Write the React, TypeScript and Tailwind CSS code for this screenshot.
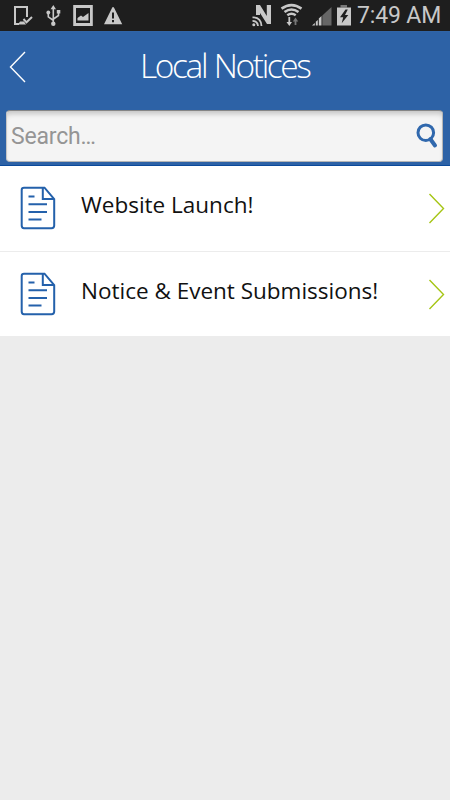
import React from 'react';

const notices = [
  { id: 1, title: 'Website Launch!' },
  { id: 2, title: 'Notice & Event Submissions!' },
];

function StatusBar() {
  return (
    <div className="flex h-[31px] items-start bg-[#1e1e1e] text-[#c8c8c8]">
      <svg width="140" height="31" viewBox="0 0 140 31" fill="none">
        <path d="M19 24H15V7H27V17" stroke="currentColor" strokeWidth="2" />
        <path d="M18 24.5L20 21.5H24L26 24.5Z" fill="currentColor" />
        <path d="M23.5 19L26.5 22.3L32 17" stroke="currentColor" strokeWidth="2" />
        <path d="M53.3 8V23M48.3 13V16.8L53.5 20.5M58.5 12V15.5L53.5 19" stroke="currentColor" strokeWidth="1.6" />
        <path d="M50.6 9.3L53.3 5L56 9.3Z" fill="currentColor" />
        <circle cx="53.3" cy="23.7" r="2.2" fill="currentColor" />
        <circle cx="48.3" cy="12.5" r="1.9" fill="currentColor" />
        <path d="M56.8 10H60.3V13.5H56.8Z" fill="currentColor" />
        <path d="M74.6 6.5H91.4V24.5H74.6Z" stroke="currentColor" strokeWidth="2.8" />
        <path d="M77.5 20.5V18L81 15.5L83 17L88.5 13V20.5Z" fill="currentColor" />
        <path d="M113 7Q113.7 7 114.2 8L122.2 24.3H104L112 8Q112.4 7 113 7Z" fill="currentColor" />
        <path d="M113 12.5V18.5M113 20V22.3" stroke="#1e1e1e" strokeWidth="2" />
      </svg>
      <svg className="ml-auto" width="115" height="31" viewBox="240 0 115 31" fill="none">
        <path d="M256 15V5H260L266.8 16V5H271V24H267L260 13V15Z" fill="currentColor" />
        <path d="M252.5 17.3Q261 17 261.5 26M252.5 20.8Q257.5 21 258 26" stroke="currentColor" strokeWidth="1.8" />
        <circle cx="253.8" cy="24.7" r="1.5" fill="currentColor" />
        <path d="M281.5 8.6Q291.5 1.5 301.5 8.6M284.5 12Q291.5 7 298.5 12M287.3 15.2Q291.5 12.3 295.7 15.2" stroke="currentColor" strokeWidth="2.6" />
        <path d="M289.3 17V24" stroke="currentColor" strokeWidth="1.8" />
        <path d="M286.5 22H292L289.3 26Z" fill="currentColor" />
        <path d="M295.5 25V20" stroke="#777777" strokeWidth="1.8" />
        <path d="M292.8 21.5H298.2L295.5 17.5Z" fill="#777777" />
        <path d="M322.3 15.5L331.5 7V25.5H322.3Z" fill="#666666" />
        <path d="M312 25.5L314.8 23V25.5ZM315.8 25.5V21.8L317.8 20V25.5ZM318.8 25.5V18.5L321.5 16V25.5Z" fill="currentColor" />
        <path d="M340.5 5H347V7.5H340.5Z" fill="#777777" />
        <path d="M337 7.5H351V25.5H337Z" fill="currentColor" />
        <path d="M345.5 9.5L340 17.3H343.2L341.7 23.3L348.3 15H345L347.8 9.5Z" fill="#1e1e1e" />
      </svg>
      <div className="w-[95px] pl-[2px] font-[Roboto,sans-serif] text-[23px] leading-[32px] tracking-[-0.15px] whitespace-nowrap">
        7:49 AM
      </div>
    </div>
  );
}

function NoticeIcon() {
  return (
    <svg width="36" height="44" viewBox="0 0 36 44" fill="none" stroke="#2461ab" strokeWidth="2">
      <path d="M4 1.7H24.5L34.2 13V39.5Q34.2 42.2 31.5 42.2H4Q1.7 42.2 1.7 39.5V4Q1.7 1.7 4 1.7Z" />
      <path d="M22.8 1.7V13H34M8.5 10.5H14.5M8.5 18.2H27M8.5 25.9H27M8.5 33.5H21.5" />
    </svg>
  );
}

export default function App() {
  return (
    <div className="flex h-[800px] w-[450px] flex-col overflow-hidden bg-[#ececec]">
      <StatusBar />
      <header className="h-[135px] border-t border-b border-t-[#3065a8] border-b-[#0b4a9b] bg-[#2d62a6]">
        <div className="flex h-[78px] items-start">
          <button className="pt-[19px] pl-[9px]">
            <svg width="18" height="32" viewBox="0 0 18 32" fill="none" stroke="#ffffff" strokeWidth="1.4">
              <path d="M16 1L1.5 16L16 31" />
            </svg>
          </button>
          <h1 className="ml-[113px] pt-[10px] font-['Open_Sans',sans-serif] text-[33.5px] leading-[47px] font-light tracking-[-2.4px] [word-spacing:1.5px] whitespace-nowrap text-white">
            Local Notices
          </h1>
        </div>
        <div className="mr-[7px] ml-[6px] flex h-[52px] items-center rounded-[4px] border border-t-[#858585] border-r-[#b5b5b5] border-b-[#b5b5b5] border-l-[#c5c5c5] bg-[#f4f4f4] pr-1 pl-1 shadow-[inset_0_5px_5px_-2px_#00000030]">
          <span className="pt-[3px] font-[Roboto,sans-serif] text-[23px] tracking-[-0.2px] text-[#959595]">
            Search…
          </span>
          <svg className="ml-auto" width="22" height="27" viewBox="0 0 22 27" fill="none" stroke="#3068ad">
            <circle cx="9.8" cy="9.7" r="7.8" strokeWidth="3" />
            <path d="M14.3 16L19 22.5" strokeWidth="4" strokeLinecap="round" />
          </svg>
        </div>
      </header>
      <ul>
        {notices.map((notice) => (
          <li key={notice.id} className="flex h-[85.5px] items-start border-b border-[#ececec] bg-white pr-[5px] pl-5">
            <div className="pt-5">
              <NoticeIcon />
            </div>
            <span className="ml-[25px] pt-[23px] font-['Open_Sans',sans-serif] text-[22.5px] leading-8 whitespace-nowrap text-[#111111]">
              {notice.title}
            </span>
            <svg className="mt-[27px] ml-auto" width="17" height="31" viewBox="0 0 17 31" fill="none" stroke="#a5c514" strokeWidth="1.4">
              <path d="M1.5 1L15.5 15.5L1.5 30" />
            </svg>
          </li>
        ))}
      </ul>
    </div>
  );
}
